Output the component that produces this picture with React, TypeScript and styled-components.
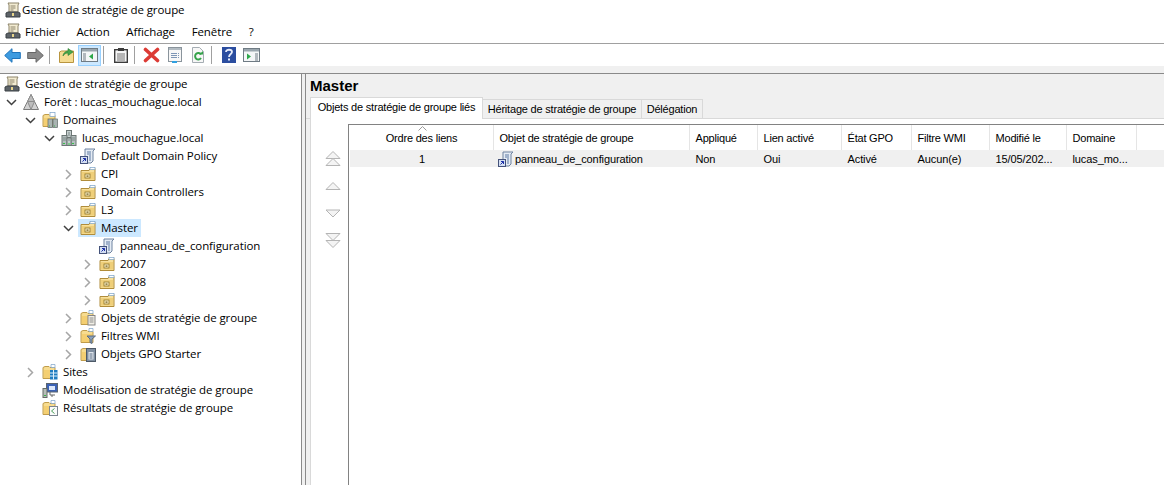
import React from 'react';
import styled, { createGlobalStyle } from 'styled-components';

const GlobalStyle = createGlobalStyle`
  html, body {
    margin: 0;
    padding: 0;
    background: #fff;
    overflow: hidden;
  }
`;

const Window = styled.div`
  width: 1164px;
  height: 485px;
  display: flex;
  flex-direction: column;
  overflow: hidden;
  background: #fff;
  color: #000;
  font-family: "Open Sans", "Noto Sans", sans-serif;
  font-size: 11.5px;
  letter-spacing: -0.1px;
`;

const TitleBar = styled.div`
  height: 19px;
  display: flex;
  align-items: center;
  padding-left: 5px;
  gap: 1px;
`;

const MenuBar = styled.div`
  height: 24px;
  display: flex;
  align-items: center;
  padding-left: 5px;
  border-bottom: 1px solid #a0a0a0;
`;

const MenuItem = styled.span`
  margin-left: 4px;
  margin-right: 12.7px;
`;

const Toolbar = styled.div`
  height: 22px;
  display: flex;
  align-items: center;
  padding-left: 1px;
`;

const ToolButton = styled.div<{ $active?: boolean }>`
  width: 23px;
  height: 21px;
  display: flex;
  align-items: center;
  justify-content: center;
  box-sizing: border-box;
  background: ${p => (p.$active ? '#cce8ff' : 'transparent')};
  border: 1px solid ${p => (p.$active ? '#99d1ff' : 'transparent')};
`;

const ToolSep = styled.div`
  width: 1px;
  height: 18px;
  background: #a0a0a0;
  margin: 0 5px 0 2px;
`;

const Strip = styled.div`
  height: 7px;
  background: #f0f0f0;
  border-bottom: 1px solid #8a8a8a;
`;

const Split = styled.div`
  flex: 1;
  display: flex;
  min-height: 0;
`;

const TreePane = styled.div`
  width: 302px;
  flex: none;
  box-sizing: border-box;
  border-right: 1px solid #8a8a8a;
  padding-top: 1px;
`;

const Gutter = styled.div`
  width: 3px;
  flex: none;
  background: #f0f0f0;
`;

const TreeRow = styled.div<{ $level: number }>`
  height: 18px;
  display: flex;
  align-items: center;
  padding-left: ${p => (p.$level === 0 ? 2 : p.$level * 19 - 15)}px;
  white-space: nowrap;
`;

const Chevron = styled.span`
  width: 15px;
  flex: none;
  margin-right: 2px;
  display: flex;
  justify-content: center;
`;

const Node = styled.span<{ $selected?: boolean }>`
  display: flex;
  align-items: center;
  height: 18px;
  padding: 0 3px 0 2px;
  gap: 5px;
  background: ${p => (p.$selected ? '#cce8ff' : 'transparent')};
`;

const NodeLabel = styled.span`
  margin-bottom: 2px;
`;

const DetailPane = styled.div`
  flex: 1;
  min-width: 0;
  display: flex;
  flex-direction: column;
  background: #f0f0f0;
  border-left: 1px solid #8a8a8a;
  font-family: "Liberation Sans", Arial, sans-serif;
  font-size: 11px;
  letter-spacing: -0.2px;
`;

const Heading = styled.div`
  height: 23px;
  padding-left: 4px;
  font-size: 15px;
  font-weight: 700;
  letter-spacing: 0;
  line-height: 23px;
`;

const TabStrip = styled.div`
  height: 21px;
  display: flex;
  align-items: flex-end;
  padding-left: 4px;
  border-bottom: 1px solid #d9d9d9;
`;

const Tab = styled.div<{ $active?: boolean; $width: number }>`
  width: ${p => p.$width}px;
  height: ${p => (p.$active ? 22 : 19)}px;
  box-sizing: border-box;
  flex: none;
  display: flex;
  align-items: center;
  justify-content: center;
  white-space: nowrap;
  padding-bottom: ${p => (p.$active ? 4 : 0)}px;
  background: ${p => (p.$active ? '#fff' : '#f0f0f0')};
  border: 1px solid #d9d9d9;
  border-left-width: ${p => (p.$active ? 1 : 0)}px;
  border-bottom-width: 0;
  margin-bottom: ${p => (p.$active ? -1 : 0)}px;
`;

const TabBody = styled.div`
  flex: 1;
  display: flex;
  min-height: 0;
  margin-left: 4px;
  padding-top: 5px;
  background: #fff;
  border-left: 1px solid #d9d9d9;
`;

const MoveColumn = styled.div`
  width: 37px;
  box-sizing: border-box;
  flex: none;
  display: flex;
  flex-direction: column;
  align-items: center;
  padding: 27px 0 0 7px;
  gap: 11px;
`;

const MoveButton = styled.div`
  height: 16px;
  display: flex;
  align-items: center;
  justify-content: center;
`;

const ListView = styled.div`
  flex: 1;
  min-width: 0;
  border-left: 1px solid #828282;
  border-top: 1px solid #828282;
`;

const columns = '144px 196px 68px 84px 70px 78px 77px 70px';

const HeaderRow = styled.div`
  display: grid;
  grid-template-columns: ${columns};
  height: 25px;
  margin-left: 1px;
`;

const HeaderCell = styled.div<{ $center?: boolean }>`
  position: relative;
  display: flex;
  align-items: center;
  justify-content: ${p => (p.$center ? 'center' : 'flex-start')};
  padding: 0 5.5px;
  border-right: 1px solid #e5e5e5;
  white-space: nowrap;
`;

const SortCaret = styled.svg`
  position: absolute;
  left: 68px;
  top: 1px;
`;

const DataRow = styled.div`
  display: grid;
  grid-template-columns: ${columns};
  height: 17px;
  margin-left: 1px;
  background: #f0f0f0;
`;

const DataCell = styled.div<{ $center?: boolean }>`
  display: flex;
  align-items: center;
  justify-content: ${p => (p.$center ? 'center' : 'flex-start')};
  gap: 1px;
  padding: 0 5.5px;
  letter-spacing: -0.1px;
  white-space: nowrap;
  overflow: hidden;

  svg {
    margin-left: -1.5px;
  }
`;

const ChevronDown = () => (
  <svg width="11" height="7" viewBox="0 0 11 7">
    <path d="M1 1l4.5 4.5L10 1" fill="none" stroke="#404040" strokeWidth="1.5" />
  </svg>
);

const ChevronRight = () => (
  <svg width="7" height="11" viewBox="0 0 7 11">
    <path d="M1 1l4.5 4.5L1 10" fill="none" stroke="#a6a6a6" strokeWidth="1.5" />
  </svg>
);

const Ico = ({ children }: { children: React.ReactNode }) => (
  <svg width="16" height="16" viewBox="0 0 16 16" style={{ flex: 'none' }}>
    {children}
  </svg>
);

const ScrollIcon = () => (
  <Ico>
    <path d="M3 1h11l-1 2v7H4V3z" fill="#f3ecd2" stroke="#8d846a" />
    <path d="M5.5 4h5M5.5 6h5M5.5 8h3" stroke="#8d846a" />
    <path d="M1 11l2-1h10l2 1v4H1z" fill="#5d6368" stroke="#3b4044" />
    <rect x="7" y="11" width="2" height="3" fill="#e8d58a" />
  </Ico>
);

const GpoIcon = () => (
  <Ico>
    <path d="M5 1h10l-2 2v10l-2 2H5z" fill="#e4ebf4" stroke="#6f83a0" />
    <path d="M7 4h4M7 6h4M9 8h2M9 10h2M9 12h2" stroke="#5f7ba3" />
    <rect x=".5" y="8.5" width="7" height="7" fill="#d3def2" stroke="#44527a" />
    <path d="M2.5 13.5l3-3M3 10.5h2.5V13" stroke="#1c30a8" fill="none" />
  </Ico>
);

const OuFolder = () => (
  <Ico>
    <path d="M1 4.5h8l1-2h5v12H1z" fill="#f7e09c" stroke="#b08c3a" />
    <rect x="10" y="1.5" width="5" height="2" fill="#fff" stroke="#7aa2c8" strokeWidth=".7" />
    <rect x="2" y="6" width="12" height="7.5" fill="#efcf7a" />
    <rect x="5" y="8" width="5" height="4" fill="#fbf0c4" stroke="#8c7228" strokeWidth=".8" />
    <rect x="6.5" y="9.5" width="2" height="1.2" fill="#6b561d" />
  </Ico>
);

const BaseFolder = ({ children }: { children: React.ReactNode }) => (
  <Ico>
    <path d="M1 14.5v-11l2-1h4l1 1h5v11z" fill="#f7dc90" stroke="#c09c4a" />
    <path d="M2 14V6h10v8z" fill="#f4cf72" />
    {children}
  </Ico>
);

const DomainsIcon = () => (
  <BaseFolder>
    <rect x="8" y=".5" width="5" height="4" fill="#fff" stroke="#7aa2c8" strokeWidth=".7" />
    <rect x="6" y="7" width="4.5" height="8.5" fill="#a9b4b2" stroke="#5f6a68" strokeWidth=".7" />
    <rect x="11" y="7" width="4.5" height="8.5" fill="#a9b4b2" stroke="#5f6a68" strokeWidth=".7" />
    <path d="M7 14h1M12 14h1" stroke="#3bb54a" />
  </BaseFolder>
);

const DomainIcon = () => (
  <Ico>
    <rect x="5.5" y=".5" width="5" height="7" fill="#c6cfcf" stroke="#6c7675" />
    <rect x="1" y="5.5" width="5" height="10" fill="#b6c0c0" stroke="#6c7675" />
    <rect x="10" y="5.5" width="5" height="10" fill="#b6c0c0" stroke="#6c7675" />
    <rect x="6" y="8" width="4" height="7.5" fill="#c6cfcf" stroke="#6c7675" />
    <path d="M2 8h3M2 10h3M11 8h3M11 10h3M7 10h2M7 3h2M7 5h2" stroke="#7d8988" />
    <path d="M2 13.5h2M11 13.5h2M7 14h2" stroke="#37c24a" />
  </Ico>
);

const ForestIcon = () => (
  <Ico>
    <path d="M8 .5l7.5 15H.5z" fill="#d2d2d2" stroke="#7c7c7c" />
    <path d="M8 .5l-3.5 7h7zM4.5 7.5l3.5 8 3.5-8" stroke="#8c8c8c" fill="#bdbdbd" />
  </Ico>
);

const GpoFolder = () => (
  <BaseFolder>
    <rect x="8" y="5.5" width="7" height="9.5" fill="#f1efe6" stroke="#868686" />
    <path d="M9.5 8h4M9.5 10h4M9.5 12h4" stroke="#8b8b8b" />
    <path d="M9 .5h4v3H9z" fill="#fff" stroke="#7aa2c8" strokeWidth=".7" />
  </BaseFolder>
);

const WmiFolder = () => (
  <BaseFolder>
    <path d="M7 8h8.5l-3.5 3v4.5l-2-1V11z" fill="#8aa1bd" stroke="#5c6d82" />
    <path d="M9 .5h4v3H9z" fill="#fff" stroke="#7aa2c8" strokeWidth=".7" />
  </BaseFolder>
);

const StarterFolder = () => (
  <BaseFolder>
    <rect x="6.5" y="2.5" width="9" height="13" fill="#7f8ea0" stroke="#4d5967" />
    <rect x="8.5" y="6" width="5" height="7.5" fill="#dfe5ec" />
    <path d="M9.5 8h3M9.5 10h3M9.5 12h3" stroke="#5c6f85" />
  </BaseFolder>
);

const SitesFolder = () => (
  <BaseFolder>
    <path d="M9 .5h4v3H9z" fill="#fff" stroke="#7aa2c8" strokeWidth=".7" />
    <rect x="8" y="6" width="7.5" height="9.5" fill="#1f7cc0" />
    <path d="M11.5 6v9.5M8 9h7.5M8 12h7.5" stroke="#dff0fb" />
  </BaseFolder>
);

const ModelingIcon = () => (
  <Ico>
    <rect x="4.5" y="1.5" width="11" height="8.5" fill="#3b62b5" stroke="#5a6470" />
    <rect x="7" y="4" width="6" height="4" fill="#dbe7fb" />
    <rect x="1" y="6.5" width="4" height="9" fill="#b6bdb8" stroke="#646b66" />
    <path d="M8 10v3h5M10 13v2" stroke="#666" fill="none" />
    <path d="M2 13.5h2" stroke="#3bb54a" />
  </Ico>
);

const ResultsFolder = () => (
  <BaseFolder>
    <path d="M9 .5h4v3H9z" fill="#fff" stroke="#7aa2c8" strokeWidth=".7" />
    <rect x="7.5" y="6.5" width="8" height="9" fill="#fbfbfb" stroke="#7b8590" />
    <path d="M12.5 8.5l-3 2.5 3 2.5" stroke="#4aa25a" fill="none" />
  </BaseFolder>
);

const BackIcon = () => (
  <svg width="17" height="15" viewBox="0 0 17 15">
    <path d="M.7 7.5L8 .7v3.8h8.3v6H8v3.8z" fill="#3d9be0" stroke="#1f74bb" />
  </svg>
);

const ForwardIcon = () => (
  <svg width="17" height="15" viewBox="0 0 17 15">
    <path d="M16.3 7.5L9 .7v3.8H.7v6H9v3.8z" fill="#8a8a8a" stroke="#666" />
  </svg>
);

const UpFolderIcon = () => (
  <Ico>
    <path d="M.5 15.5V5l2-1h12v11.5z" fill="#f5dc92" stroke="#b9953f" />
    <path d="M4 9c0-3 3-5 5-5V1.5l5 3.5-5 3.5V6C7 6 5 7 4 9z" fill="#46a64a" stroke="#2c7f31" strokeWidth=".6" />
  </Ico>
);

const PaneIcon = ({ right }: { right?: boolean }) => (
  <svg width="17" height="14" viewBox="0 0 17 14">
    <rect x=".5" y=".5" width="16" height="13" fill="#f4f6f7" stroke="#6f7b84" />
    <rect x="1" y="1" width="15" height="2.5" fill="#9aa6ae" />
    <path
      d={right ? 'M12 6h3M12 8h3M12 10h3M12 12h3' : 'M2 6h3M2 8h3M2 10h3M2 12h3'}
      stroke="#6f7b84"
    />
    <path d={right ? 'M4 5.5l4 3-4 3z' : 'M12 5.5l-4 3 4 3z'} fill="#2ea84a" />
  </svg>
);

const ClipboardIcon = () => (
  <Ico>
    <rect x="1.7" y="2.7" width="12.6" height="12.6" fill="#f5f5f5" stroke="#3c3c3c" strokeWidth="1.4" />
    <rect x="5" y="1" width="6" height="3" fill="#3c3c3c" />
    <path d="M4 7h8M4 9h8M4 11h8M4 13h8" stroke="#777" />
  </Ico>
);

const DeleteIcon = () => (
  <svg width="17" height="16" viewBox="0 0 17 16">
    <path d="M2.5 2.5l12 11M14.5 2.5l-12 11" stroke="#dc3b35" strokeWidth="3.6" strokeLinecap="round" />
  </svg>
);

const PropertiesIcon = () => (
  <Ico>
    <rect x="1.5" y=".5" width="13" height="14" fill="#f7f7f7" stroke="#8a949c" />
    <rect x="2" y="1" width="12" height="2" fill="#b3bcc3" />
    <path d="M4 6.5h8M4 8.5h8M4 10.5h8" stroke="#7d95b5" strokeDasharray="6 1" />
    <rect x="5" y="14" width="5" height="2" fill="#2fa0e0" />
  </Ico>
);

const RefreshIcon = () => (
  <Ico>
    <path d="M2.5 .5h7l4 4v11h-11z" fill="#f7f7f7" stroke="#a5adb3" />
    <path d="M11 7.5A3.2 3.2 0 1 0 11 11" fill="none" stroke="#35a34a" strokeWidth="2" />
    <path d="M9 7.5h4V4z" fill="#35a34a" />
  </Ico>
);

const HelpIcon = () => (
  <svg width="14" height="16" viewBox="0 0 14 16">
    <rect width="14" height="16" fill="#2b4d9f" />
    <path d="M4 5c0-3 6-3 6 0 0 2-3 2-3 5" fill="none" stroke="#e6ecfa" strokeWidth="1.8" />
    <rect x="6" y="11.5" width="2" height="2" fill="#e6ecfa" />
  </svg>
);

const Tri = ({ d }: { d: string }) => <path d={d} fill="#f4f4f4" stroke="#b4b4b4" />;

const MoveTop = () => (
  <svg width="16" height="16" viewBox="0 0 16 16">
    <Tri d="M8 .5l7 7H1z" />
    <Tri d="M8 7.5l7 7H1z" />
  </svg>
);

const MoveUp = () => (
  <svg width="16" height="9" viewBox="0 0 16 9">
    <Tri d="M8 .5l7 7H1z" />
  </svg>
);

const MoveDown = () => (
  <svg width="16" height="9" viewBox="0 0 16 9">
    <Tri d="M8 8l7-7H1z" />
  </svg>
);

const MoveBottom = () => (
  <svg width="16" height="16" viewBox="0 0 16 16">
    <Tri d="M8 8.5l7-7H1z" />
    <Tri d="M8 15.5l7-7H1z" />
  </svg>
);

type TreeItem = {
  label: string;
  level: number;
  icon: React.ReactNode;
  expander?: 'open' | 'closed';
  selected?: boolean;
};

const tree: TreeItem[] = [
  { label: 'Gestion de stratégie de groupe', level: 0, icon: <ScrollIcon /> },
  { label: 'Forêt : lucas_mouchague.local', level: 1, icon: <ForestIcon />, expander: 'open' },
  { label: 'Domaines', level: 2, icon: <DomainsIcon />, expander: 'open' },
  { label: 'lucas_mouchague.local', level: 3, icon: <DomainIcon />, expander: 'open' },
  { label: 'Default Domain Policy', level: 4, icon: <GpoIcon /> },
  { label: 'CPI', level: 4, icon: <OuFolder />, expander: 'closed' },
  { label: 'Domain Controllers', level: 4, icon: <OuFolder />, expander: 'closed' },
  { label: 'L3', level: 4, icon: <OuFolder />, expander: 'closed' },
  { label: 'Master', level: 4, icon: <OuFolder />, expander: 'open', selected: true },
  { label: 'panneau_de_configuration', level: 5, icon: <GpoIcon /> },
  { label: '2007', level: 5, icon: <OuFolder />, expander: 'closed' },
  { label: '2008', level: 5, icon: <OuFolder />, expander: 'closed' },
  { label: '2009', level: 5, icon: <OuFolder />, expander: 'closed' },
  { label: 'Objets de stratégie de groupe', level: 4, icon: <GpoFolder />, expander: 'closed' },
  { label: 'Filtres WMI', level: 4, icon: <WmiFolder />, expander: 'closed' },
  { label: 'Objets GPO Starter', level: 4, icon: <StarterFolder />, expander: 'closed' },
  { label: 'Sites', level: 2, icon: <SitesFolder />, expander: 'closed' },
  { label: 'Modélisation de stratégie de groupe', level: 2, icon: <ModelingIcon /> },
  { label: 'Résultats de stratégie de groupe', level: 2, icon: <ResultsFolder /> },
];

const headers = ['Objet de stratégie de groupe', 'Appliqué', 'Lien activé', 'État GPO', 'Filtre WMI', 'Modifié le', 'Domaine'];
const cells = ['Non', 'Oui', 'Activé', 'Aucun(e)', '15/05/202...', 'lucas_mo...'];

export default function App() {
  return (
    <Window>
      <GlobalStyle />
      <TitleBar>
        <ScrollIcon />
        <span>Gestion de stratégie de groupe</span>
      </TitleBar>
      <MenuBar>
        <ScrollIcon />
        {['Fichier', 'Action', 'Affichage', 'Fenêtre', '?'].map(m => (
          <MenuItem key={m}>{m}</MenuItem>
        ))}
      </MenuBar>
      <Toolbar>
        <ToolButton><BackIcon /></ToolButton>
        <ToolButton><ForwardIcon /></ToolButton>
        <ToolSep />
        <ToolButton><UpFolderIcon /></ToolButton>
        <ToolButton $active><PaneIcon /></ToolButton>
        <ToolSep />
        <ToolButton><ClipboardIcon /></ToolButton>
        <ToolSep />
        <ToolButton><DeleteIcon /></ToolButton>
        <ToolButton><PropertiesIcon /></ToolButton>
        <ToolButton><RefreshIcon /></ToolButton>
        <ToolSep />
        <ToolButton><HelpIcon /></ToolButton>
        <ToolButton><PaneIcon right /></ToolButton>
      </Toolbar>
      <Strip />
      <Split>
        <TreePane>
          {tree.map(item => (
            <TreeRow key={item.label} $level={item.level}>
              {item.level > 0 && (
                <Chevron>
                  {item.expander === 'open' && <ChevronDown />}
                  {item.expander === 'closed' && <ChevronRight />}
                </Chevron>
              )}
              <Node $selected={item.selected}>
                {item.icon}
                <NodeLabel>{item.label}</NodeLabel>
              </Node>
            </TreeRow>
          ))}
        </TreePane>
        <Gutter />
        <DetailPane>
          <Heading>Master</Heading>
          <TabStrip>
            <Tab $active $width={173}>Objets de stratégie de groupe liés</Tab>
            <Tab $width={159}>Héritage de stratégie de groupe</Tab>
            <Tab $width={61}>Délégation</Tab>
          </TabStrip>
          <TabBody>
            <MoveColumn>
              <MoveButton><MoveTop /></MoveButton>
              <MoveButton><MoveUp /></MoveButton>
              <MoveButton><MoveDown /></MoveButton>
              <MoveButton><MoveBottom /></MoveButton>
            </MoveColumn>
            <ListView>
              <HeaderRow>
                <HeaderCell $center>
                  <SortCaret width="9" height="5" viewBox="0 0 9 5">
                    <path d="M.5 4.5l4-4 4 4" fill="none" stroke="#9a9a9a" />
                  </SortCaret>
                  Ordre des liens
                </HeaderCell>
                {headers.map(h => (
                  <HeaderCell key={h}>{h}</HeaderCell>
                ))}
              </HeaderRow>
              <DataRow>
                <DataCell $center>1</DataCell>
                <DataCell><GpoIcon />panneau_de_configuration</DataCell>
                {cells.map(c => (
                  <DataCell key={c}>{c}</DataCell>
                ))}
              </DataRow>
            </ListView>
          </TabBody>
        </DetailPane>
      </Split>
    </Window>
  );
}
